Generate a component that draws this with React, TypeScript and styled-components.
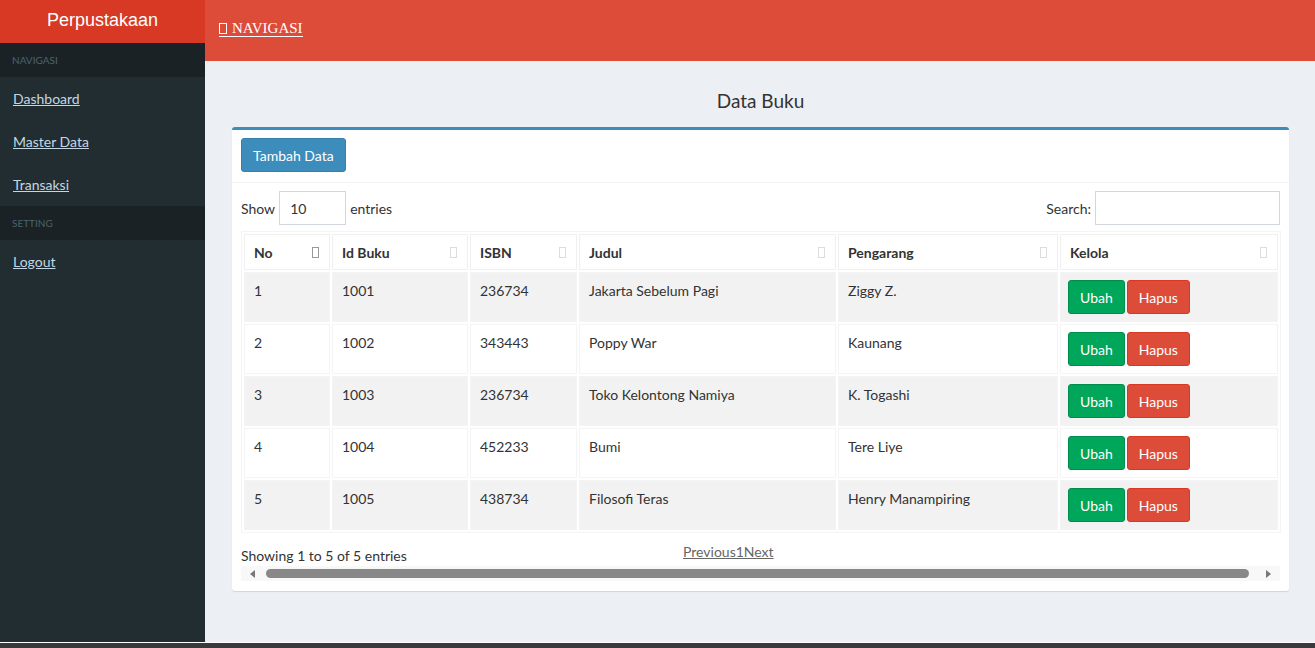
import React from "react";
import styled, { createGlobalStyle } from "styled-components";

const Global = createGlobalStyle`
  html, body { margin: 0; padding: 0; }
  body { font-family: Lato, "Open Sans", sans-serif; font-size: 14px; color: #333; background: #3a3a3a; }
  * { box-sizing: border-box; }
`;

const Page = styled.div`
  display: flex;
  height: 643px;
  background: #ecf0f5;
  border-bottom: 1px solid #fff;
`;

const Sidebar = styled.aside`
  width: 205px;
  flex: none;
  background: #222d32;
  display: flex;
  flex-direction: column;
`;

const Logo = styled.div`
  height: 43px;
  background: #d73925;
  color: #fff;
  font-family: "Liberation Sans", Arial, sans-serif;
  font-size: 18px;
  text-align: center;
  line-height: 40px;
`;

const SectionHeader = styled.div`
  height: 34px;
  background: #1a2226;
  color: #4b646f;
  font-size: 10px;
  padding-left: 12px;
  display: flex;
  align-items: center;
`;

const MenuLink = styled.a`
  display: flex;
  align-items: center;
  height: 43px;
  padding-left: 13px;
  padding-bottom: 1px;
  color: #c3d7e2;
  text-decoration: underline;
  font-size: 14px;
`;

const Main = styled.div`
  flex: 1;
  min-width: 0;
  display: flex;
  flex-direction: column;
`;

const Navbar = styled.div`
  height: 61px;
  background: #dd4b39;
  display: flex;
  align-items: center;
  padding-left: 14px;
`;

const NavToggle = styled.a`
  font-family: "Liberation Serif", "Times New Roman", serif;
  color: #fff;
  font-size: 15px;
  text-decoration: none;
  border-bottom: 1px solid #fff;
  line-height: 16px;
  margin-bottom: 4px;
  display: inline-flex;
  align-items: center;
  gap: 5px;
`;

const BarsIcon = styled.span`
  display: inline-block;
  width: 8px;
  height: 11px;
  border: 1px solid #fff;
`;

const Content = styled.section`
  padding: 28px 26px 0 27px;
`;

const Title = styled.h1`
  margin: 0 0 14px;
  text-align: center;
  font-size: 19px;
  font-weight: 400;
  line-height: 24px;
  color: #333;
`;

const Box = styled.div`
  background: #fff;
  border-top: 3px solid #3c8dbc;
  border-radius: 3px;
  box-shadow: 0 1px 1px rgba(0,0,0,0.12);
`;

const BoxHeader = styled.div`
  padding: 8px 9px 10px;
  border-bottom: 1px solid #f4f4f4;
`;

const Btn = styled.button<{ $bg: string; $border: string }>`
  background: ${p => p.$bg};
  border: 1px solid ${p => p.$border};
  color: #fff;
  border-radius: 3px;
  height: 34px;
  padding: 0 11px;
  font-family: inherit;
  font-size: 14px;
  cursor: pointer;
`;

const BoxBody = styled.div`
  padding: 8px 9px 10px;
`;

const Controls = styled.div`
  display: flex;
  justify-content: space-between;
  align-items: center;
  margin-bottom: 6px;
`;

const Label = styled.label`
  display: flex;
  align-items: center;
  gap: 4px;
`;

const Input = styled.input<{ $w: number }>`
  width: ${p => p.$w}px;
  height: 34px;
  border: 1px solid #d2d6de;
  padding: 0 10px;
  font-family: inherit;
  font-size: 14px;
  color: #333;
`;

const Table = styled.table`
  width: 100%;
  border-collapse: separate;
  border-spacing: 2px;
  border: 1px solid #f4f4f4;
  table-layout: fixed;
`;

const Th = styled.th`
  text-align: left;
  font-weight: 700;
  padding: 8px 9px;
  height: 36px;
  border: 1px solid #f0f0f0;
  background: #fff;
  position: relative;
`;

const SortIcon = styled.span<{ $dark?: boolean }>`
  position: absolute;
  right: 10px;
  top: 12px;
  width: 7px;
  height: 11px;
  border: 1px solid ${p => (p.$dark ? "#999" : "#ddd")};
`;

const Tr = styled.tr<{ $odd: boolean }>`
  background: ${p => (p.$odd ? "#f2f2f2" : "#fff")};
`;

const Td = styled.td`
  padding: 8px 9px;
  height: 50px;
  vertical-align: top;
  border: 1px solid #f4f4f4;
  line-height: 20px;
`;

const ActionCell = styled(Td)`
  padding: 7px 7px;
`;

const Actions = styled.div`
  display: flex;
  gap: 2px;
`;

const Footer = styled.div`
  display: flex;
  align-items: flex-start;
  margin-top: 10px;
`;

const Info = styled.div`
  width: 442px;
  padding-top: 4px;
`;

const Paginate = styled.a`
  color: #666;
  text-decoration: underline;
`;

const Scrollbar = styled.div`
  display: flex;
  align-items: center;
  height: 15px;
  background: #f8f8f8;
  margin-top: 2px;
  padding: 0 6px;
  gap: 6px;
`;

const Arrow = styled.span<{ $dir: "left" | "right" }>`
  width: 0;
  height: 0;
  border-top: 4px solid transparent;
  border-bottom: 4px solid transparent;
  ${p => (p.$dir === "left" ? "border-right: 5px solid #777;" : "border-left: 5px solid #777;")}
  margin: 0 3px;
`;

const Thumb = styled.div`
  flex: 1;
  height: 9px;
  border-radius: 5px;
  background: #888;
  margin: 0 8px 0 2px;
`;

const rows = [
  ["1", "1001", "236734", "Jakarta Sebelum Pagi", "Ziggy Z."],
  ["2", "1002", "343443", "Poppy War", "Kaunang"],
  ["3", "1003", "236734", "Toko Kelontong Namiya", "K. Togashi"],
  ["4", "1004", "452233", "Bumi", "Tere Liye"],
  ["5", "1005", "438734", "Filosofi Teras", "Henry Manampiring"],
];

const cols: [string, number][] = [
  ["No", 86], ["Id Buku", 136], ["ISBN", 107], ["Judul", 257], ["Pengarang", 220], ["Kelola", 218],
];

export default function App() {
  return (
    <>
      <Global />
      <Page>
        <Sidebar>
          <Logo>Perpustakaan</Logo>
          <SectionHeader>NAVIGASI</SectionHeader>
          <MenuLink href="#">Dashboard</MenuLink>
          <MenuLink href="#">Master Data</MenuLink>
          <MenuLink href="#">Transaksi</MenuLink>
          <SectionHeader>SETTING</SectionHeader>
          <MenuLink href="#">Logout</MenuLink>
        </Sidebar>
        <Main>
          <Navbar>
            <NavToggle href="#"><BarsIcon />NAVIGASI</NavToggle>
          </Navbar>
          <Content>
            <Title>Data Buku</Title>
            <Box>
              <BoxHeader>
                <Btn $bg="#3c8dbc" $border="#367fa9">Tambah Data</Btn>
              </BoxHeader>
              <BoxBody>
                <Controls>
                  <Label>Show <Input $w={67} defaultValue="10" /> entries</Label>
                  <Label>Search: <Input $w={185} /></Label>
                </Controls>
                <Table>
                  <colgroup>
                    {cols.map(([n, w]) => <col key={n} style={{ width: w }} />)}
                  </colgroup>
                  <thead>
                    <tr>
                      {cols.map(([n], i) => (
                        <Th key={n}>{n}<SortIcon $dark={i === 0} /></Th>
                      ))}
                    </tr>
                  </thead>
                  <tbody>
                    {rows.map((r, i) => (
                      <Tr key={r[0]} $odd={i % 2 === 0}>
                        {r.map((c, j) => <Td key={j}>{c}</Td>)}
                        <ActionCell>
                          <Actions>
                            <Btn $bg="#00a65a" $border="#008d4c">Ubah</Btn>
                            <Btn $bg="#dd4b39" $border="#d73925">Hapus</Btn>
                          </Actions>
                        </ActionCell>
                      </Tr>
                    ))}
                  </tbody>
                </Table>
                <Footer>
                  <Info>Showing 1 to 5 of 5 entries</Info>
                  <Paginate href="#">Previous1Next</Paginate>
                </Footer>
                <Scrollbar>
                  <Arrow $dir="left" />
                  <Thumb />
                  <Arrow $dir="right" />
                </Scrollbar>
              </BoxBody>
            </Box>
          </Content>
        </Main>
      </Page>
    </>
  );
}
